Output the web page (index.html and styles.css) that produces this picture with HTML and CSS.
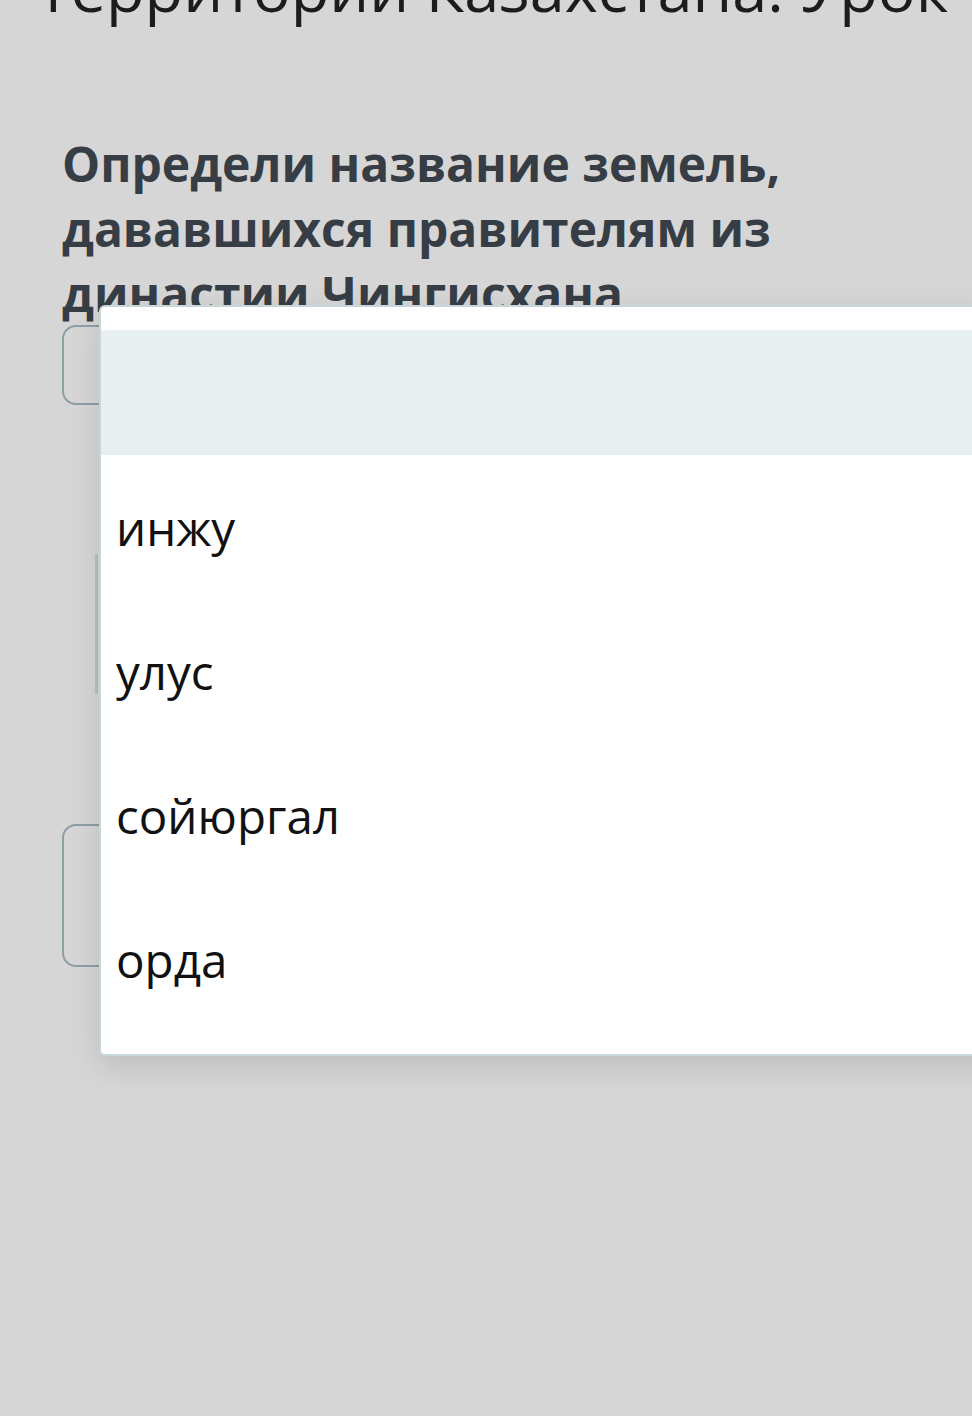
FILE: index.html
```html
<!DOCTYPE html>
<html lang="ru">
<head>
<meta charset="utf-8">
<link rel="stylesheet" href="styles.css">
</head>
<body>
<div class="page">
  <h1 class="title">Территории Казахстана. Урок</h1>
  <p class="question">Определи название земель, дававшихся правителям из династии Чингисхана</p>
  <div class="field field-one"></div>
  <div class="field field-two"></div>
  <div class="field field-three"></div>
</div>
<div class="dropdown">
  <div class="option option-empty"></div>
  <div class="option">инжу</div>
  <div class="option">улус</div>
  <div class="option">сойюргал</div>
  <div class="option">орда</div>
</div>
</body>
</html>
```
FILE: styles.css
```css
html, body {
  margin: 0;
  padding: 0;
  background: #d6d6d6;
  font-family: "Open Sans", "Noto Sans", sans-serif;
  overflow: hidden;
  height: 1416px;
}
.page {
  padding-left: 62px;
  padding-top: 1px;
  position: relative;
}
.title {
  margin: -49px 0 0 -26px;
  font-size: 63px;
  line-height: 72px;
  font-weight: 400;
  color: #1c1c1c;
  white-space: nowrap;
}
.question {
  margin: 107px 0 0;
  font-size: 48px;
  line-height: 65px;
  font-weight: 700;
  color: #363d45;
  width: 780px;
}
.field {
  border: 2px solid #8d9ea4;
  border-radius: 14px;
  box-sizing: border-box;
  width: 900px;
}
.field-one {
  margin-top: -1px;
  height: 80px;
}
.field-two {
  margin: 149px 0 0 33px;
  height: 140px;
  border-radius: 0;
  border-width: 0 0 0 3px;
  border-color: #b9c0c3;
}
.field-three {
  margin-top: 130px;
  height: 143px;
}
.dropdown {
  position: absolute;
  left: 99px;
  top: 305px;
  width: 900px;
  height: 751px;
  box-sizing: border-box;
  padding: 23px 0 24px;
  background: #ffffff;
  border: 2px solid #c6d6d9;
  border-radius: 6px;
  box-shadow: 0 10px 30px rgba(0, 0, 0, 0.12);
}
.option {
  height: 144px;
  display: flex;
  align-items: center;
  padding-left: 15px;
  font-size: 47.5px;
  color: #111111;
}
.option-empty {
  height: 125px;
  background: #e8eff1;
}
```
